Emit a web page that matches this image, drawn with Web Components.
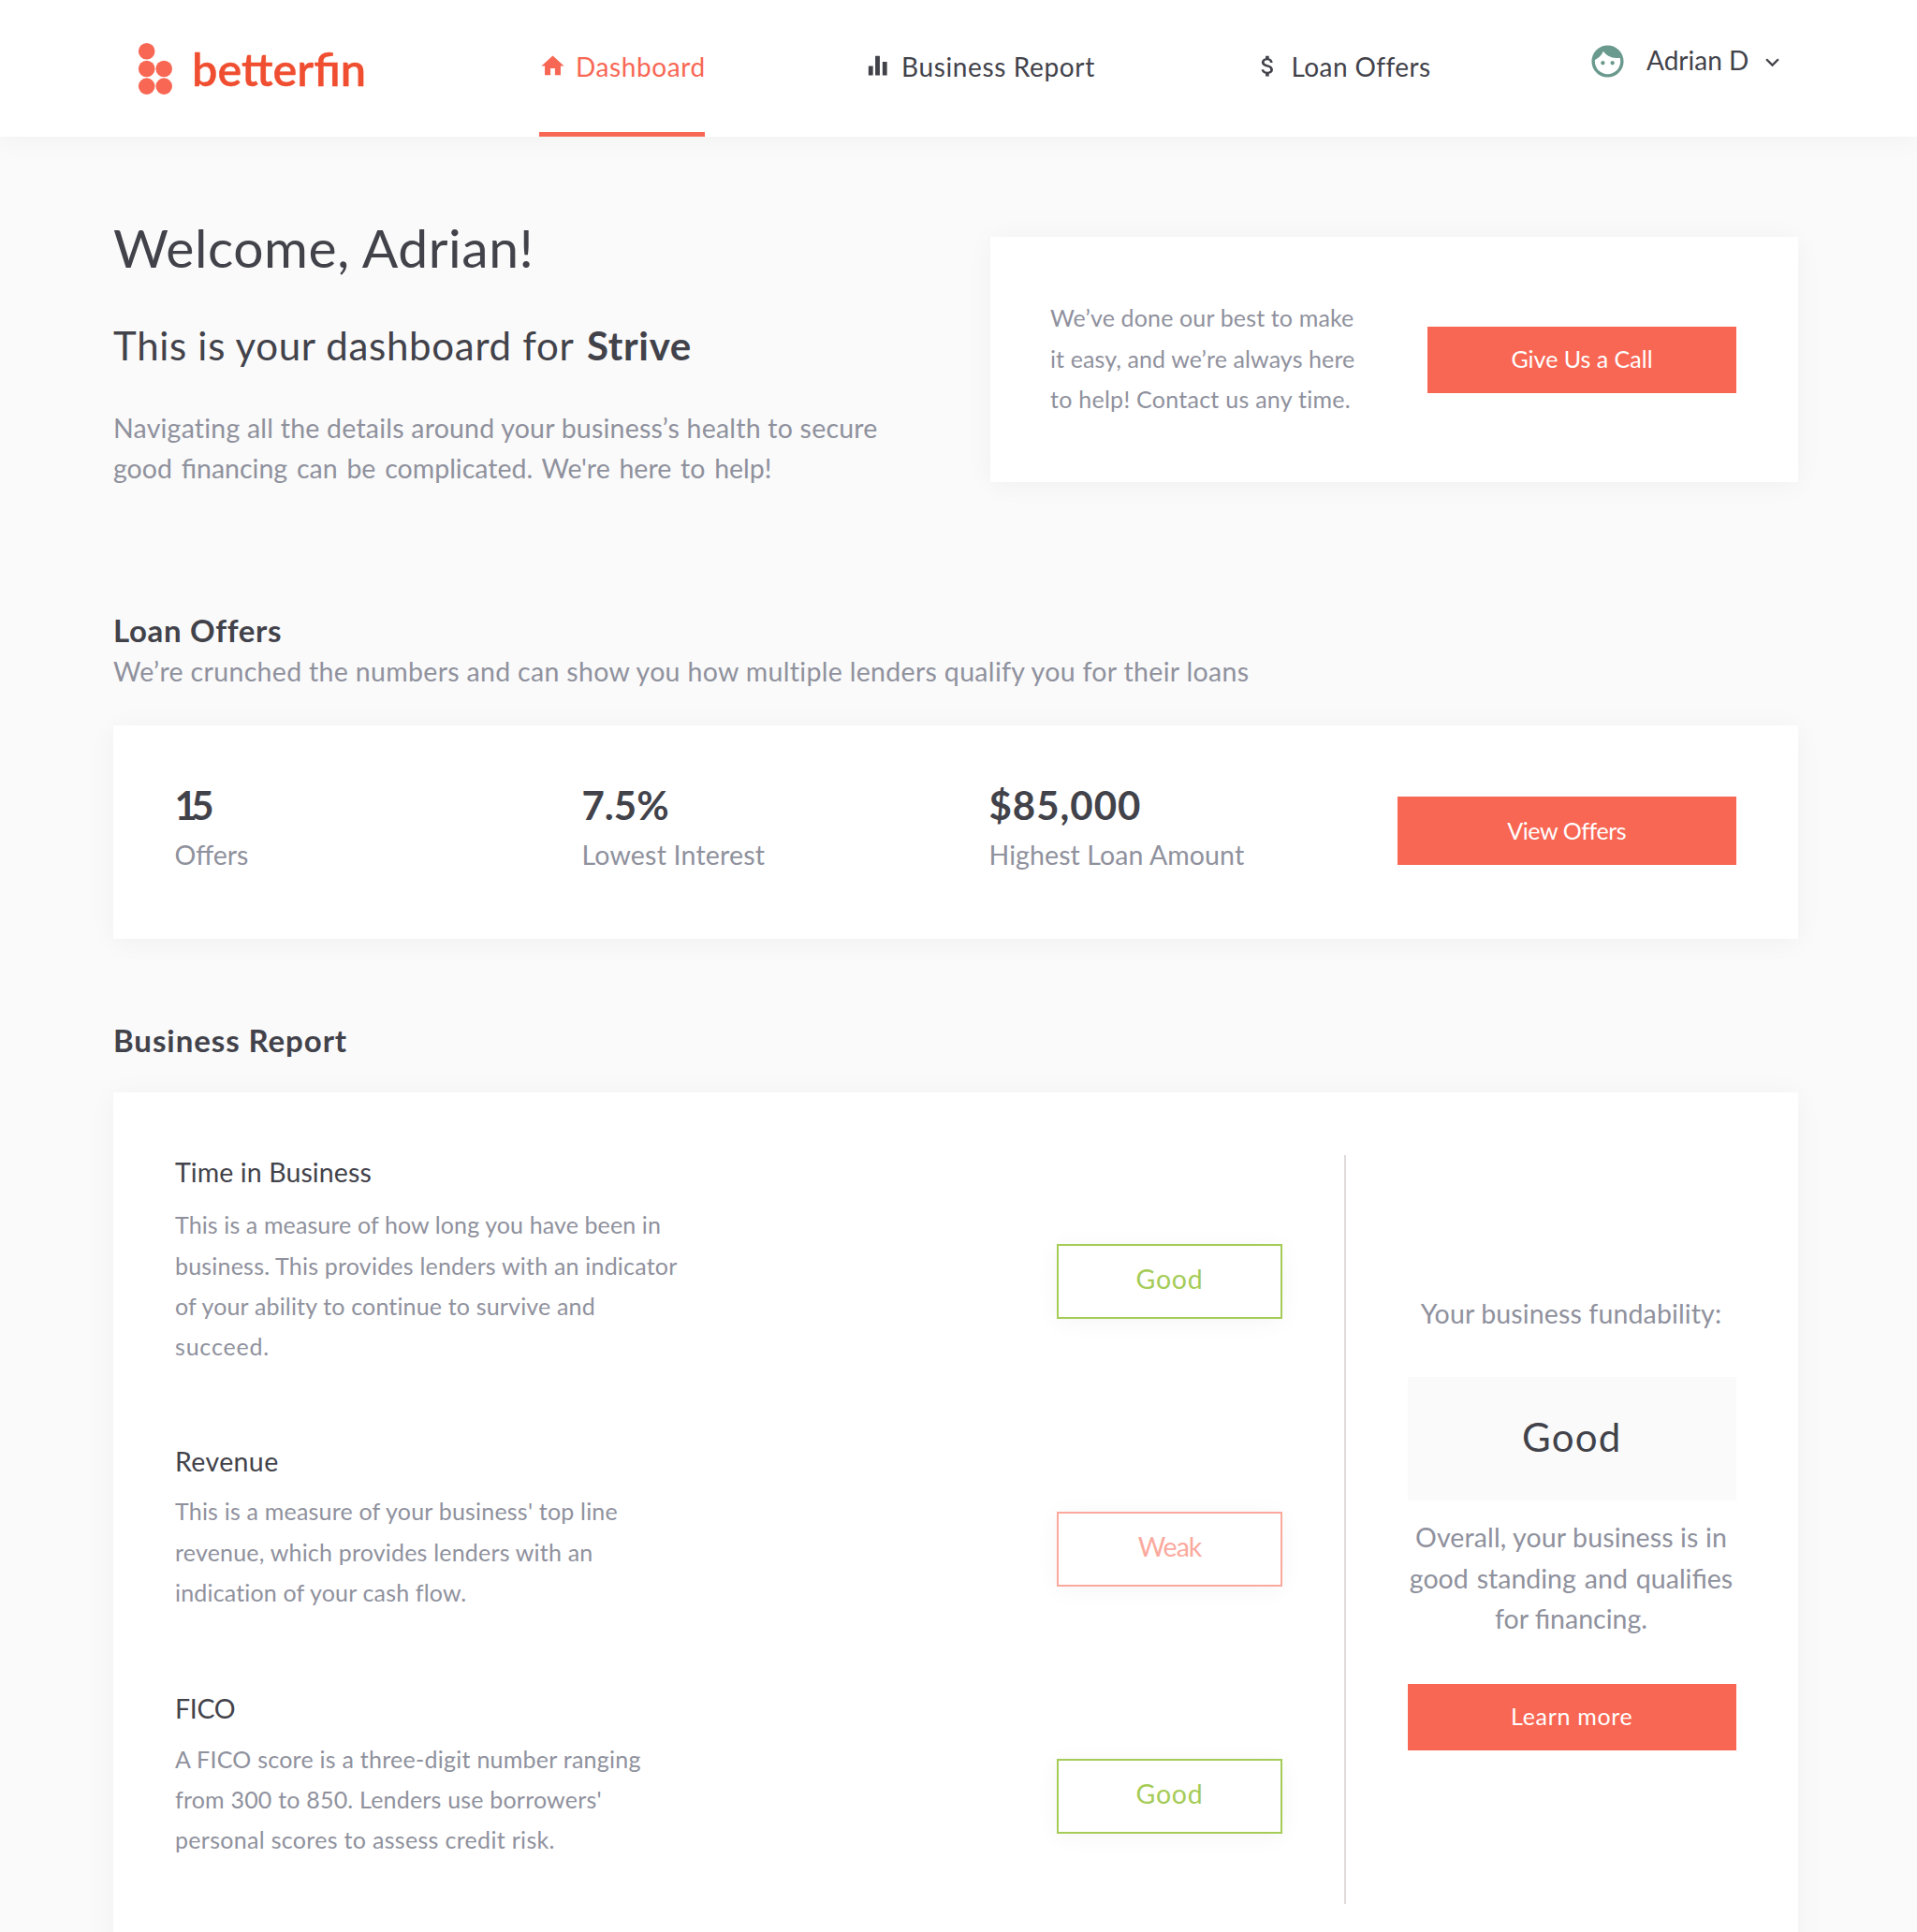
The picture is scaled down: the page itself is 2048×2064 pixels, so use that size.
<!DOCTYPE html>
<html lang="en">
<head>
<meta charset="utf-8">
<title>Betterfin – Dashboard</title>
<style>
  html, body { margin: 0; height: 2064px; overflow: hidden; background: #fafafa; }
  body {
    --coral: #f86754; --ink: #42424a; --muted: #8f919d;
    --green: #a5cc57; --rose: #fba99d; --page: #fafafa;
    font-family: Lato, "Liberation Sans", sans-serif; color: var(--ink);
  }
</style>
</head>
<body>
<bf-app></bf-app>
<script>
const define = (name, html) => {
  const tpl = document.createElement('template');
  tpl.innerHTML = html;
  customElements.define(name, class extends HTMLElement {
    constructor() {
      super();
      this.attachShadow({ mode: 'open' }).append(tpl.content.cloneNode(true));
    }
  });
};

/* One unbroken line of copy; tracking and line height are inherited. */
define('bf-line', `
<style>:host{display:block;white-space:nowrap;font-kerning:normal}</style><slot></slot>`);

/* Icons */
const ICONS = {
  home: '<path d="M10 20v-6h4v6h5v-8h3L12 2.8 2 12h3v8z"/>',
  bars: '<path d="M10 20.3h4V3.2h-4v17.1zm-6 0h4v-8.2H4v8.2zM16.4 8.2v12.1h4V8.2h-4z"/>',
  money: '<path d="M11.8 10.9c-2.27-.59-3-1.2-3-2.15 0-1.09 1.01-1.85 2.7-1.85 1.78 0 2.44.85 2.5 2.1h2.21c-.07-1.72-1.12-3.3-3.21-3.81V3h-3v2.16c-1.94.42-3.5 1.68-3.5 3.61 0 2.31 1.91 3.46 4.7 4.13 2.5.6 3 1.48 3 2.41 0 .69-.49 1.79-2.7 1.79-2.06 0-2.87-.92-2.98-2.1h-2.2c.12 2.19 1.76 3.42 3.68 3.83V21h3v-2.15c1.95-.37 3.5-1.5 3.5-3.55 0-2.84-2.43-3.81-4.7-4.4z"/>',
  face: '<path d="M9 11.75c-.69 0-1.25.56-1.25 1.25s.56 1.25 1.25 1.25 1.25-.56 1.25-1.25-.56-1.25-1.25-1.25zm6 0c-.69 0-1.25.56-1.25 1.25s.56 1.25 1.25 1.25 1.25-.56 1.25-1.25-.56-1.25-1.25-1.25zM12 2C6.48 2 2 6.48 2 12s4.48 10 10 10 10-4.48 10-10S17.52 2 12 2zm0 18c-4.41 0-8-3.59-8-8 0-.29.02-.58.05-.86 2.36-1.05 4.23-2.98 5.21-5.37C11.07 8.33 14.05 10 17.42 10c.78 0 1.53-.09 2.25-.26.21.71.33 1.47.33 2.26 0 4.41-3.59 8-8 8z"/>',
  chevron: '<path d="M16.59 8.59L12 13.17 7.41 8.59 6 10l6 6 6-6z"/>'
};
customElements.define('bf-icon', class extends HTMLElement {
  connectedCallback() {
    if (this.shadowRoot) return;
    this.attachShadow({ mode: 'open' }).innerHTML =
      `<style>:host{display:block;flex:none;width:29px;height:29px}svg{display:block;width:100%;height:100%;fill:currentColor}</style>
       <svg viewBox="0 0 24 24">${ICONS[this.getAttribute('name')]}</svg>`;
  }
});

define('bf-logo', `
<style>
  :host{display:flex;align-items:flex-start;color:#f04e30}
  svg{display:block;width:38px;height:57px;margin-top:44.5px;fill:var(--coral)}
  span{margin:42.5px 0 0 20px;font-size:48.6px;line-height:60px;font-weight:600;-webkit-text-stroke:.4px #f04e30;white-space:nowrap}
</style>
<svg viewBox="147 44.5 38 57">
  <circle cx="156.7" cy="54.3" r="8.8"/><circle cx="156.7" cy="73" r="8.8"/><circle cx="175.2" cy="73" r="8.8"/>
  <circle cx="156.7" cy="91.6" r="8.8"/><circle cx="175.2" cy="91.6" r="8.8"/>
</svg><span>betterfin</span>`);

define('bf-nav-item', `
<style>
  :host{display:flex;align-items:flex-start;box-sizing:border-box;height:146px;padding-top:49px;gap:10px;
    border-bottom:5px solid transparent;font-size:28px;line-height:44px}
  :host([active]){color:var(--coral);border-bottom-color:var(--coral)}
</style>
<slot name="icon"></slot><slot></slot>`);

define('bf-user-menu', `
<style>
  :host{display:flex;align-items:flex-start;font-size:28px;line-height:44px}
  .face{width:41px;height:41px;margin:45.3px 21px 0 0;color:#6a998d}
  .chev{margin:52.2px 0 0 12px}
  bf-line{margin-top:42px;width:108px}
</style>
<bf-icon class="face" name="face"></bf-icon><bf-line>Adrian D</bf-line><bf-icon class="chev" name="chevron"></bf-icon>`);

define('bf-header', `
<style>
  :host{display:flex;height:146px;background:#fff;box-shadow:0 2px 28px rgba(0,0,0,.045);position:relative}
  bf-logo{width:429px;padding-left:147px;flex:none}
  bf-nav-item{flex:none}
  .ic{margin-top:6.5px}
  .a{width:177px}
  .b{width:250px;margin-left:170px;gap:11px}
  .c{width:192px;margin-left:166.5px;gap:11px}
  bf-user-menu{margin-left:165.5px}
</style>
<bf-logo></bf-logo>
<bf-nav-item class="a" active><bf-icon class="ic" slot="icon" name="home"></bf-icon><bf-line style="letter-spacing:.0218em">Dashboard</bf-line></bf-nav-item>
<bf-nav-item class="b"><bf-icon class="ic" slot="icon" name="bars"></bf-icon><bf-line style="letter-spacing:.0228em">Business Report</bf-line></bf-nav-item>
<bf-nav-item class="c"><bf-icon class="ic" slot="icon" name="money"></bf-icon><bf-line style="letter-spacing:.015em">Loan Offers</bf-line></bf-nav-item>
<bf-user-menu></bf-user-menu>`);

define('bf-card', `
<style>:host{display:flex;box-sizing:border-box;background:#fff;box-shadow:0 3px 28px rgba(0,0,0,.045)}</style><slot></slot>`);

define('bf-button', `
<style>:host{display:block;flex:none;height:71px;box-sizing:border-box;background:var(--coral);color:#fff;
  font-size:25px;line-height:69px;text-align:center;white-space:nowrap;cursor:pointer}</style><slot></slot>`);

define('bf-badge', `
<style>
  :host{display:block;flex:none;box-sizing:border-box;width:241px;height:80px;border:2px solid var(--green);color:var(--green);
    background:#fff;box-shadow:0 3px 24px rgba(0,0,0,.045);font-size:28.5px;line-height:71px;text-align:center;letter-spacing:.025em}
  :host([tone=weak]){border-color:var(--rose);color:var(--rose);letter-spacing:-.035em}
</style><slot></slot>`);

define('bf-hero', `
<style>
  :host{display:flex;justify-content:space-between;align-items:flex-start}
  h1,h2{margin:0;font-weight:400;white-space:nowrap}
  h1{font-size:57px;line-height:70px;letter-spacing:.0095em}
  h2{font-size:42px;line-height:52px;margin-top:44.5px;letter-spacing:.0165em}
  h2 b{letter-spacing:.0154em;margin-left:3px}
  .lead{margin-top:41px;font-size:28.5px;line-height:43.33px;color:var(--muted)}
  bf-card{width:862.5px;height:262px;margin-top:24.5px;padding:0 65.5px 0 64px;align-items:center;justify-content:space-between}
  .note{font-size:25px;line-height:43.33px;color:var(--muted);padding-bottom:1.5px}
  bf-button{width:330px}
</style>
<div>
  <h1>Welcome, Adrian!</h1>
  <h2>This is your dashboard for <b>Strive</b></h2>
  <div class="lead">
    <bf-line style="letter-spacing:.0075em">Navigating all the details around your business’s health to secure</bf-line>
    <bf-line style="word-spacing:2.5px">good financing can be complicated. We're here to help!</bf-line>
  </div>
</div>
<bf-card>
  <div class="note">
    <bf-line style="letter-spacing:.0057em">We’ve done our best to make</bf-line>
    <bf-line style="letter-spacing:.004em">it easy, and we’re always here</bf-line>
    <bf-line style="letter-spacing:.0105em">to help! Contact us any time.</bf-line>
  </div>
  <bf-button>Give Us a Call</bf-button>
</bf-card>`);

define('bf-stat', `
<style>
  :host{display:block;white-space:nowrap}
  .n{font-size:42px;line-height:50px;font-weight:700;margin-bottom:7.3px}
  .l{font-size:28.5px;line-height:43.33px;color:var(--muted)}
</style><div class="n"><slot name="value"></slot></div><div class="l"><slot></slot></div>`);

define('bf-offers', `
<style>
  :host{display:block}
  h3{margin:0;font-size:33px;line-height:44px;letter-spacing:.0205em}
  .sub{margin-top:1px;font-size:28.5px;line-height:43.33px;color:var(--muted);letter-spacing:.0112em}
  bf-card{display:grid;grid-template-columns:435px 435px 436.5px 361.5px;align-items:start;height:228px;margin-top:35.3px;padding:60px 66px 0 65.5px}
  bf-button{height:73px;line-height:72px;margin-top:15.5px;letter-spacing:-.0168em}
</style>
<h3>Loan Offers</h3>
<bf-line class="sub">We’re crunched the numbers and can show you how multiple lenders qualify you for their loans</bf-line>
<bf-card>
  <bf-stat><bf-line slot="value" style="letter-spacing:-.16em">15</bf-line><bf-line>Offers</bf-line></bf-stat>
  <bf-stat><bf-line slot="value">7.5%</bf-line><bf-line style="letter-spacing:.0071em">Lowest Interest</bf-line></bf-stat>
  <bf-stat><bf-line slot="value" style="letter-spacing:.0233em">$85,000</bf-line><bf-line style="letter-spacing:.0035em">Highest Loan Amount</bf-line></bf-stat>
  <bf-button>View Offers</bf-button>
</bf-card>`);

define('bf-metric', `
<style>
  :host{display:flex;justify-content:space-between;align-items:flex-start}
  .t{font-size:28.5px;line-height:43.33px;margin-bottom:var(--title-gap,10.4px)}
  .d{font-size:25px;line-height:43.33px;color:var(--muted)}
  .s{margin-top:var(--badge-top,75.6px)}
</style>
<div><div class="t"><slot name="title"></slot></div><div class="d"><slot></slot></div></div>
<div class="s"><slot name="status"></slot></div>`);

define('bf-fundability', `
<style>
  :host{display:flex;flex-direction:column;font-size:28.5px;line-height:43.33px;color:var(--muted);text-align:center}
  .score{margin:45.7px 0 18.6px;height:132px;background:var(--page);color:var(--ink);font-size:42px;line-height:129px;letter-spacing:.03em}
  bf-button{margin-top:47.4px;letter-spacing:.027em}
  bf-line{margin-right:1.5px}
</style>
<bf-line style="letter-spacing:.0045em">Your business fundability:</bf-line>
<div class="score">Good</div>
<bf-line style="letter-spacing:.0042em">Overall, your business is in</bf-line>
<bf-line style="word-spacing:1.7px">good standing and qualifies</bf-line>
<bf-line>for financing.</bf-line>
<bf-button>Learn more</bf-button>`);

define('bf-report', `
<style>
  :host{display:block}
  h3{margin:0;font-size:33px;line-height:44px;letter-spacing:.028em}
  bf-card{margin-top:34.5px;height:933px;padding:0 66px;align-items:flex-start}
  .list{display:flex;flex-direction:column;gap:80px;width:1183px;padding-top:64.2px;flex:none}
  .list > bf-metric:first-child{margin-bottom:-1px}
  .rule{flex:none;width:2px;height:800px;margin:66.5px 66px 0 66px;background:#dfdada}
  bf-fundability{flex:none;width:350.5px;padding-top:214.8px}
</style>
<h3>Business Report</h3>
<bf-card>
  <div class="list">
    <bf-metric style="--title-gap:12.6px;--badge-top:97.6px">
      <bf-line slot="title" style="letter-spacing:.0035em">Time in Business</bf-line>
      <bf-line style="letter-spacing:.0045em">This is a measure of how long you have been in</bf-line>
      <bf-line style="letter-spacing:.008em">business. This provides lenders with an indicator</bf-line>
      <bf-line style="letter-spacing:.0066em">of your ability to continue to survive and</bf-line>
      <bf-line style="letter-spacing:.032em">succeed.</bf-line>
      <bf-badge slot="status">Good</bf-badge>
    </bf-metric>
    <bf-metric>
      <bf-line slot="title" style="letter-spacing:.0137em">Revenue</bf-line>
      <bf-line style="letter-spacing:.008em">This is a measure of your business' top line</bf-line>
      <bf-line style="letter-spacing:.0078em">revenue, which provides lenders with an</bf-line>
      <bf-line style="letter-spacing:.0068em">indication of your cash flow.</bf-line>
      <bf-badge slot="status" tone="weak">Weak</bf-badge>
    </bf-metric>
    <bf-metric style="--title-gap:10.2px;--badge-top:74.8px;margin-top:.8px">
      <bf-line slot="title" style="letter-spacing:-.012em">FICO</bf-line>
      <bf-line style="letter-spacing:.01em">A FICO score is a three-digit number ranging</bf-line>
      <bf-line style="letter-spacing:.0079em">from 300 to 850. Lenders use borrowers'</bf-line>
      <bf-line style="letter-spacing:.0123em">personal scores to assess credit risk.</bf-line>
      <bf-badge slot="status">Good</bf-badge>
    </bf-metric>
  </div>
  <div class="rule"></div>
  <bf-fundability></bf-fundability>
</bf-card>`);

define('bf-app', `
<style>
  :host{display:block;width:2048px;height:2064px;overflow:hidden}
  main{padding:82.5px 127.5px 0 121px}
  bf-offers{margin-top:128.8px}
  bf-report{margin-top:85.5px}
</style>
<bf-header></bf-header>
<main><bf-hero></bf-hero><bf-offers></bf-offers><bf-report></bf-report></main>`);
</script>
</body>
</html>
